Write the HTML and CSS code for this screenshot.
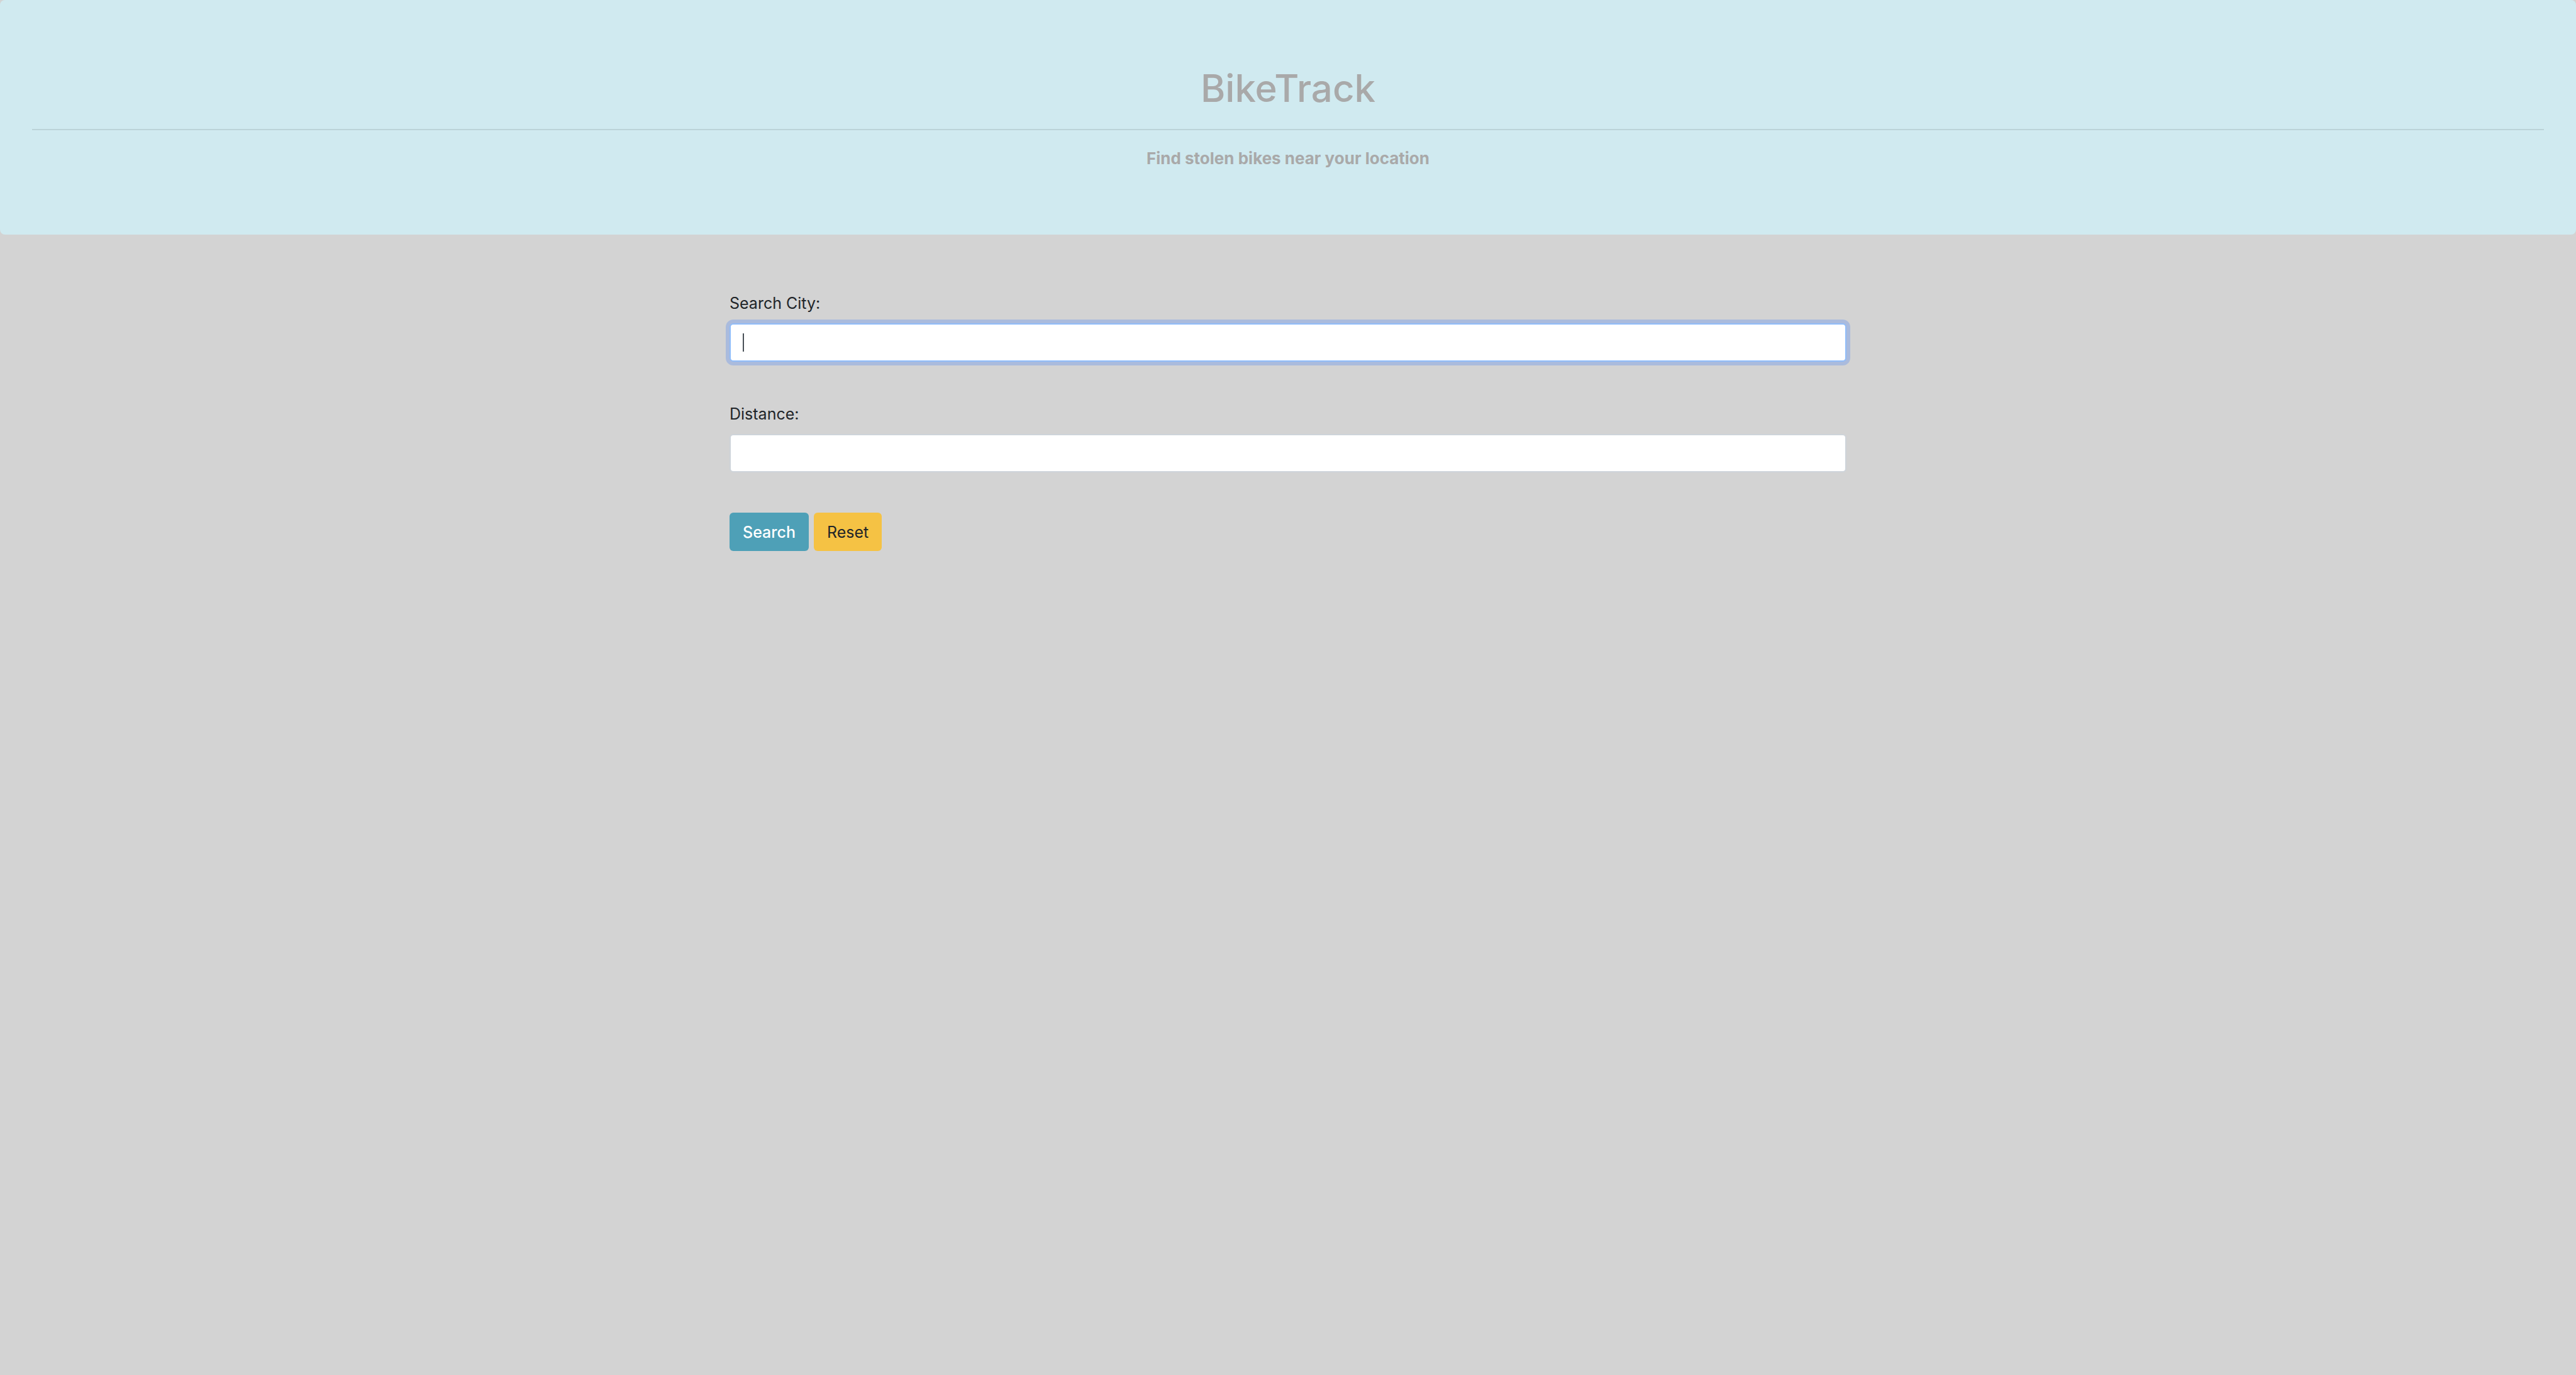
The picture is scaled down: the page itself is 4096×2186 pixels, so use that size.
FILE: index.html
```html
<!DOCTYPE html>
<html lang="en">
<head>
  <meta charset="utf-8">
  <title>BikeTrack</title>
  <link rel="stylesheet" href="styles.css">
</head>
<body>
  <header class="banner">
    <h1 class="banner-title">BikeTrack</h1>
    <hr class="banner-rule">
    <p class="banner-lead">Find stolen bikes near your location</p>
  </header>
  <main class="container">
    <form class="search-form">
      <div class="field">
        <label class="field-label" for="city">Search City:</label>
        <input class="field-input is-active" type="text" id="city" autofocus>
      </div>
      <div class="field">
        <label class="field-label" for="distance">Distance:</label>
        <input class="field-input" type="text" id="distance">
      </div>
      <div class="actions">
        <button class="btn btn-search" type="submit">Search</button>
        <button class="btn btn-reset" type="reset">Reset</button>
      </div>
    </form>
  </main>
</body>
</html>
```

FILE: styles.css
```css
*,
*::before,
*::after {
  box-sizing: border-box;
}

body {
  margin: 0;
  background: #d3d3d3;
  color: #212529;
  font-family: Inter, "Liberation Sans", sans-serif;
  font-size: 25px;
  line-height: 38px;
}

.banner {
  padding: 102px 51px;
  border-radius: 8px;
  background: #d0eaf0;
  color: #a9a9a9;
  text-align: center;
}

.banner-title {
  margin: 0;
  font-size: 60px;
  font-weight: 500;
  line-height: 77px;
}

.banner-rule {
  height: 2px;
  margin: 26px 0;
  border: 0;
  background: #bbd3d8;
}

.banner-lead {
  margin: 0;
  font-size: 26px;
  font-weight: 700;
}

.container {
  max-width: 1824px;
  margin: 0 auto;
  padding: 90px 24px;
}

.search-form {
  display: flex;
  flex-direction: column;
  gap: 64px;
}

.field {
  display: flex;
  flex-direction: column;
  gap: 13px;
}

.field-input {
  width: 100%;
  height: 61px;
  padding: 10px 19px;
  border: 2px solid #ced4da;
  border-radius: 6px;
  background: #fff;
  color: #495057;
  font: inherit;
  outline: 0;
}

.field-input.is-active {
  border-color: #90bdf9;
  background: #fff linear-gradient(#495057, #495057) 19px 14px / 2px 29px no-repeat;
  box-shadow: 0 0 0 6px #aabbdd;
  caret-color: transparent;
}

.actions {
  display: flex;
  gap: 8px;
}

.btn {
  height: 61px;
  padding: 0 21px;
  border: 0;
  border-radius: 6px;
  font: inherit;
}

.btn-search {
  background: #4ea0b7;
  color: #fff;
  font-weight: 500;
}

.btn-reset {
  background: #f5c244;
  color: #212529;
}
```
